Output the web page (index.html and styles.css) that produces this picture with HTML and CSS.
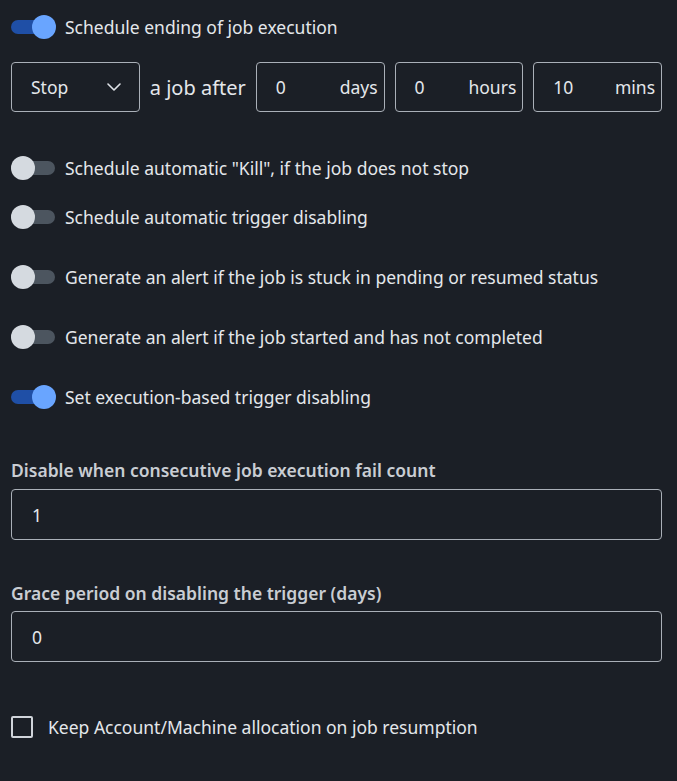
FILE: index.html
```html
<!DOCTYPE html>
<html>
<head>
<meta charset="utf-8">
<link rel="stylesheet" href="styles.css">
</head>
<body>
<div class="form">
  <div class="toggle-row first">
    <span class="switch on"><span class="track"></span><span class="knob"></span></span>
    <span class="label">Schedule ending of job execution</span>
  </div>

  <div class="after-row">
    <div class="box select">
      <span>Stop</span>
      <svg class="chev" width="14" height="8" viewBox="0 0 14 8"><path d="M1 1 L7 7 L13 1" fill="none" stroke="#dfe3e8" stroke-width="1.6" stroke-linecap="round" stroke-linejoin="round"/></svg>
    </div>
    <span class="after">a job after</span>
    <div class="box num"><span>0</span><span>days</span></div>
    <div class="box num"><span>0</span><span>hours</span></div>
    <div class="box num"><span>10</span><span>mins</span></div>
  </div>

  <div class="toggle-row kill">
    <span class="switch"><span class="track"></span><span class="knob"></span></span>
    <span class="label">Schedule automatic "Kill", if the job does not stop</span>
  </div>
  <div class="toggle-row tight">
    <span class="switch"><span class="track"></span><span class="knob"></span></span>
    <span class="label">Schedule automatic trigger disabling</span>
  </div>
  <div class="toggle-row">
    <span class="switch"><span class="track"></span><span class="knob"></span></span>
    <span class="label">Generate an alert if the job is stuck in pending or resumed status</span>
  </div>
  <div class="toggle-row">
    <span class="switch"><span class="track"></span><span class="knob"></span></span>
    <span class="label">Generate an alert if the job started and has not completed</span>
  </div>
  <div class="toggle-row">
    <span class="switch on"><span class="track"></span><span class="knob"></span></span>
    <span class="label">Set execution-based trigger disabling</span>
  </div>

  <div class="field f1">
    <div class="field-label">Disable when consecutive job execution fail count</div>
    <div class="box wide"><span>1</span></div>
  </div>
  <div class="field f2">
    <div class="field-label">Grace period on disabling the trigger (days)</div>
    <div class="box wide"><span>0</span></div>
  </div>

  <div class="check-row">
    <span class="checkbox"></span>
    <span class="label">Keep Account/Machine allocation on job resumption</span>
  </div>
</div>
</body>
</html>
```

FILE: styles.css
```css
html, body {
  margin: 0;
  padding: 0;
  background: #1b1f26;
}
body {
  font-family: "Noto Sans", "Open Sans", sans-serif;
  color: #e4e7eb;
  font-size: 17.5px;
}
.form {
  padding: 0 15px 0 11px;
  width: 651px;
}
.toggle-row {
  display: flex;
  align-items: center;
  height: 30px;
  gap: 9px;
  margin-top: 30px;
}
.toggle-row.first { margin-top: 12px; }
.toggle-row.kill { margin-top: 41px; }
.toggle-row.tight { margin-top: 19px; }
.switch {
  position: relative;
  width: 45px;
  height: 24px;
  flex: none;
}
.switch .track {
  position: absolute;
  left: 0;
  right: 1px;
  top: 5px;
  height: 14px;
  border-radius: 7px;
  background: #4c555f;
}
.switch .knob {
  position: absolute;
  left: 0;
  top: 0;
  width: 24px;
  height: 24px;
  border-radius: 50%;
  background: #d5dae0;
}
.switch.on .track { background: #1f4fa6; }
.switch.on .knob { left: 21px; background: #69a5ff; }
.label { white-space: nowrap; }

.after-row {
  display: flex;
  align-items: center;
  margin-top: 20px;
  height: 50px;
}
.box {
  box-sizing: border-box;
  height: 50px;
  border: 1px solid #aab0b8;
  border-radius: 4px;
  display: flex;
  align-items: center;
  justify-content: space-between;
  padding: 0 19px;
  font-size: 17.5px;
  color: #e4e7eb;
}
.select { width: 129px; }
.chev { margin-right: -1px; }
.after {
  font-size: 20px;
  margin: 0 10px 0 10px;
  white-space: nowrap;
}
.num {
  width: 129px;
  padding: 0 6px 0 19px;
  margin-right: 10px;
}
.num:last-child { margin-right: 0; }

.field-label {
  font-weight: 600;
  color: #c9cdd3;
  font-size: 17.5px;
  height: 24px;
  line-height: 24px;
}
.field.f1 { margin-top: 46px; }
.field.f2 { margin-top: 41px; }
.box.wide {
  width: 651px;
  height: 51px;
  margin-top: 7px;
  justify-content: flex-start;
  padding-left: 20px;
}
.field.f2 .box.wide { margin-top: 6px; }
.check-row {
  display: flex;
  align-items: center;
  gap: 15px;
  margin-top: 54px;
  height: 22px;
}
.checkbox {
  box-sizing: border-box;
  width: 22px;
  height: 22px;
  border: 2px solid #d0d4da;
  border-radius: 2px;
  flex: none;
}
```
